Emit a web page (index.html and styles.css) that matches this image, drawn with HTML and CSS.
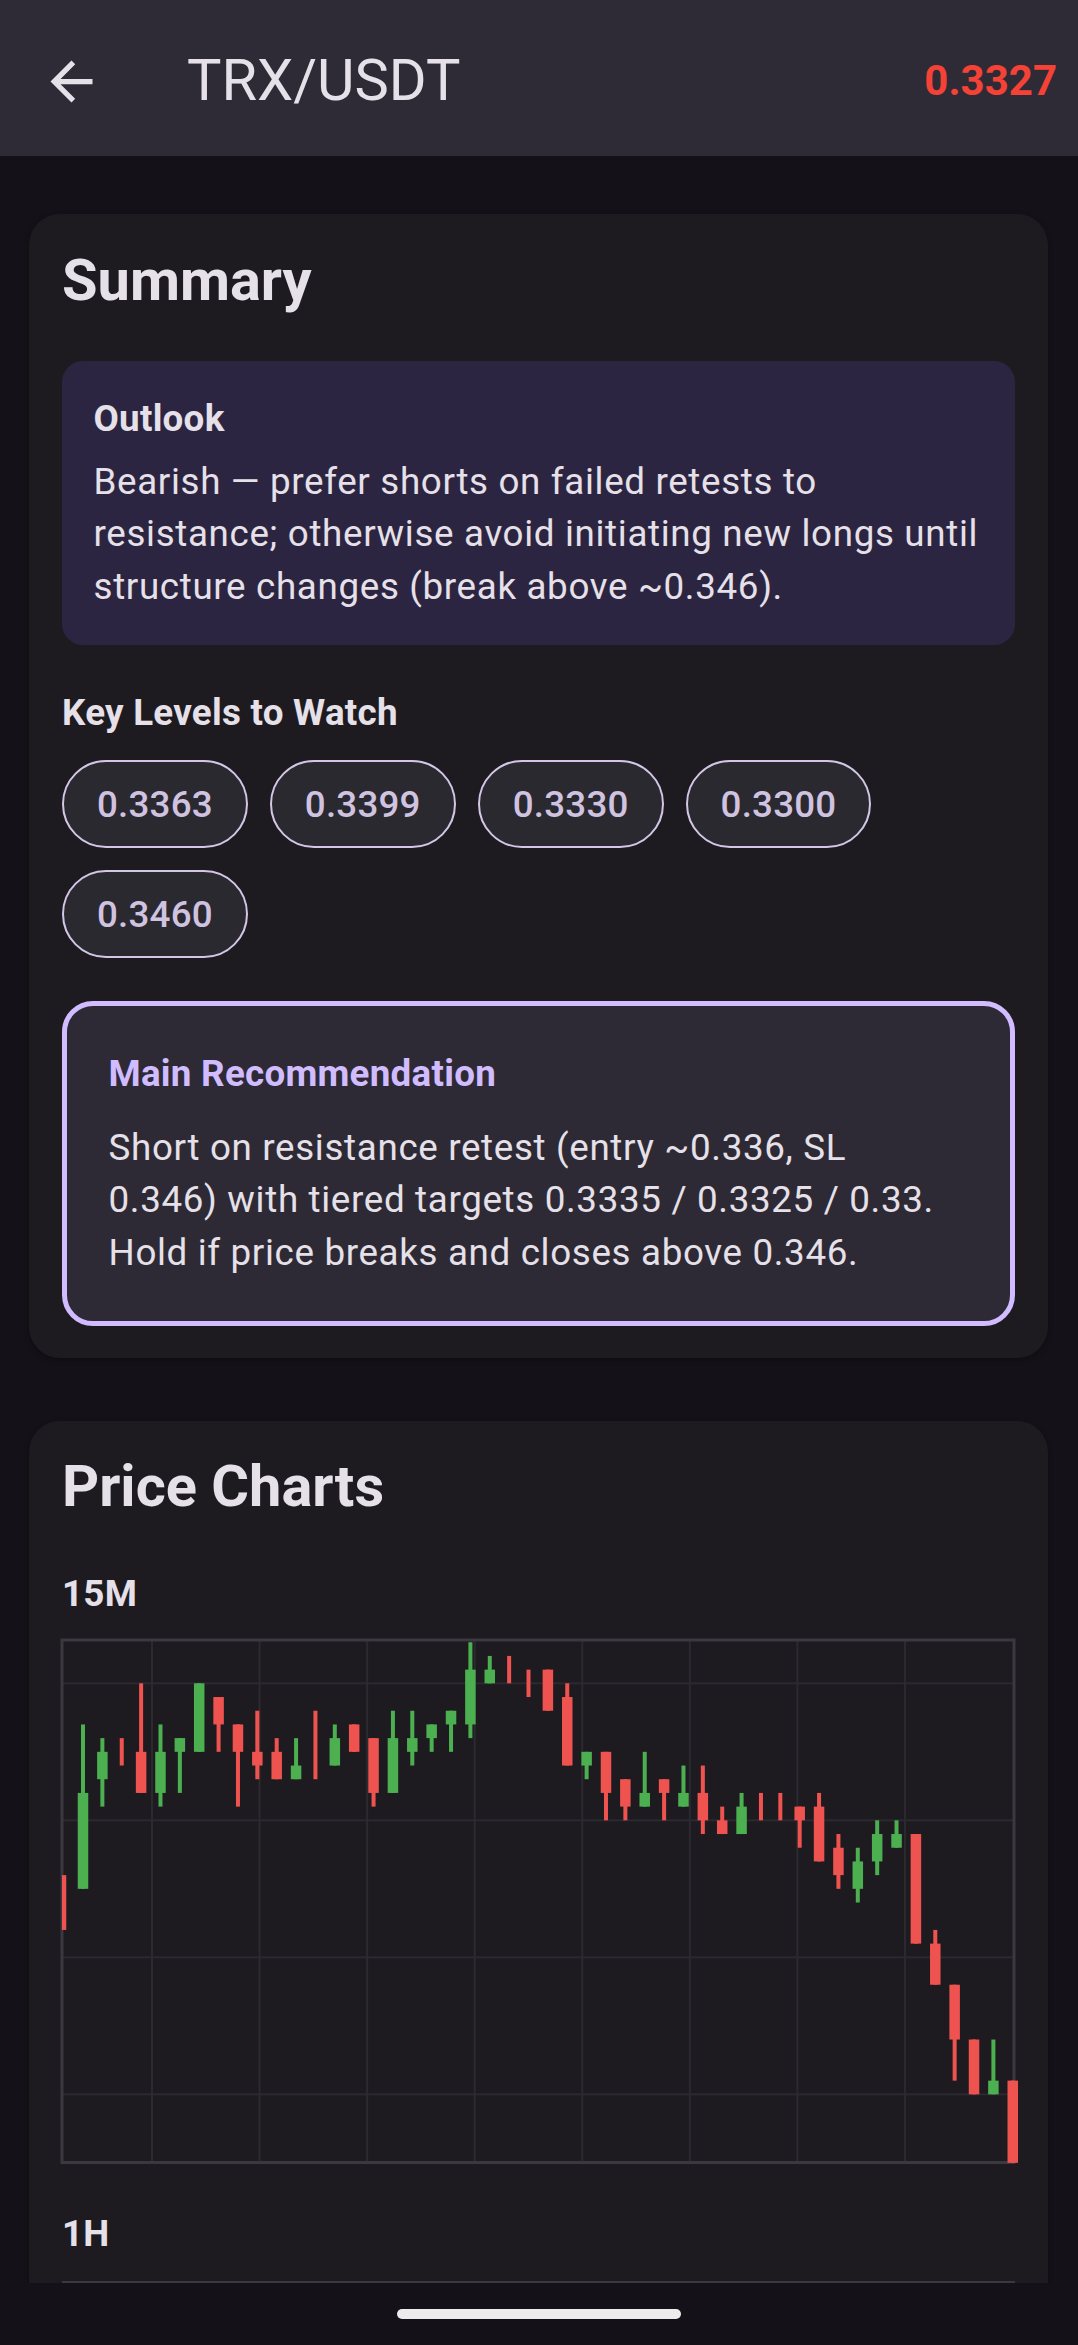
FILE: index.html
```html
<!DOCTYPE html>
<html lang="en">
<head>
<meta charset="utf-8">
<title>TRX/USDT</title>
<link rel="stylesheet" href="styles.css">
</head>
<body>
<div class="screen">
  <header class="appbar">
    <button class="back" aria-label="Back">
      <svg viewBox="0 0 24 24"><path d="M20 11H7.83l5.59-5.59L12 4l-8 8 8 8 1.41-1.41L7.83 13H20v-2z"/></svg>
    </button>
    <h1 class="title">TRX/USDT</h1>
    <span class="price">0.3327</span>
  </header>

  <main class="content">
    <section class="card">
      <h2 class="card-title">Summary</h2>
      <div class="outlook">
        <h3 class="label">Outlook</h3>
        <p class="body-text">Bearish — prefer shorts on failed retests to resistance; otherwise avoid initiating new longs until structure changes (break above ~0.346).</p>
      </div>
      <h3 class="label levels-title">Key Levels to Watch</h3>
      <div class="chips">
        <span class="chip">0.3363</span>
        <span class="chip">0.3399</span>
        <span class="chip">0.3330</span>
        <span class="chip">0.3300</span>
        <span class="chip">0.3460</span>
      </div>
      <div class="rec">
        <h3 class="label rec-title">Main Recommendation</h3>
        <p class="body-text rec-text">Short on resistance retest (entry ~0.336, SL<br>0.346) with tiered targets 0.3335 / 0.3325 / 0.33. Hold if price breaks and closes above 0.346.</p>
      </div>
    </section>

    <section class="card">
      <h2 class="card-title">Price Charts</h2>
      <div class="chart-block">
        <h3 class="label">15M</h3>
        <svg class="chart" id="chart15m" width="953" height="524" viewBox="0 0 953 524"></svg>
      </div>
      <div class="chart-block">
        <h3 class="label">1H</h3>
        <div class="chart-frame"></div>
      </div>
    </section>
  </main>

  <footer class="navbar"><span class="pill"></span></footer>
</div>
<script src="script.js"></script>
</body>
</html>
```

FILE: styles.css
```css
* { box-sizing: border-box; }

html, body {
  margin: 0;
  padding: 0;
}

body {
  background: #141218;
  font-family: Roboto, "Noto Sans", "Liberation Sans", sans-serif;
  color: #e6e0e9;
}

.screen {
  width: 1078px;
  height: 2345px;
  display: flex;
  flex-direction: column;
  overflow: hidden;
}

/* App bar */
.appbar {
  flex: 0 0 156px;
  background: #2e2b37;
  display: flex;
  align-items: center;
  padding: 6px 21px 0 40px;
}

.back {
  width: 63px;
  height: 63px;
  padding: 0;
  border: 0;
  background: none;
  display: flex;
}

.back svg {
  width: 63px;
  height: 63px;
  fill: #e6e0e9;
}

.title {
  flex: 1;
  margin: 0 0 0 84px;
  font-size: 57.75px;
  font-weight: 400;
  line-height: 1.172;
  color: #e6e0e9;
}

.price {
  font-size: 42px;
  font-weight: 700;
  color: #f44336;
  line-height: 1.172;
}

/* Content */
.content {
  flex: 1;
  overflow: hidden;
  padding: 58px 30px 0 29px;
  display: flex;
  flex-direction: column;
  gap: 63px;
}

.card {
  flex-shrink: 0;
  background: #1d1b20;
  border-radius: 31px;
  padding: 29.5px 33px 31.5px 33px;
  box-shadow: 0 2px 5px rgba(0, 0, 0, 0.35);
}

.card-title {
  margin: 0;
  font-size: 57.75px;
  font-weight: 700;
  line-height: 73.5px;
}

.label {
  margin: 0;
  font-size: 36.75px;
  font-weight: 700;
  line-height: 52.5px;
  letter-spacing: 0.26px;
}

.body-text {
  margin: 10.5px 0 0;
  font-size: 36.75px;
  font-weight: 400;
  line-height: 52.5px;
  letter-spacing: 0.66px;
}

.outlook {
  margin-top: 44px;
  background: #2c2541;
  border-radius: 21px;
  padding: 31.5px 26px 31.5px 31.5px;
}

.levels-title {
  margin-top: 42px;
}

.chips {
  margin-top: 21px;
  display: flex;
  flex-wrap: wrap;
  gap: 22px 22px;
}

.chip {
  height: 88px;
  display: flex;
  align-items: center;
  padding: 0 33px;
  border: 2px solid #d3c6e6;
  border-radius: 44px;
  background: #2b2930;
  color: #d0c3e0;
  font-size: 36.75px;
  font-weight: 500;
  letter-spacing: 0.2px;
}

.rec {
  margin-top: 43px;
  background: #2d2a35;
  border: 5.25px solid #d0bcff;
  border-radius: 31px;
  padding: 42px 40px 42px 41.5px;
}

.rec-title {
  color: #d0bcff;
}

.rec-text {
  margin-top: 21px;
}

/* Charts */
.chart-block {
  margin-top: 44px;
  display: flex;
  flex-direction: column;
  gap: 20px;
}

.chart {
  display: block;
  overflow: visible;
}

.chart-frame {
  height: 524px;
  border: 3px solid #3b393f;
}

/* Navigation bar */
.navbar {
  flex: 0 0 62px;
  background: #141218;
  display: flex;
  align-items: center;
  justify-content: center;
}

.pill {
  width: 284px;
  height: 10px;
  border-radius: 5px;
  background: #ececec;
}
```

FILE: script.js
```js
(function () {
  var NS = 'http://www.w3.org/2000/svg';
  var svg = document.getElementById('chart15m');
  var W = 952, H = 522.5;
  var GRID = '#2c2a31', FRAME = '#3b393f';
  var GREEN = '#4caf50', RED = '#ef5350';

  function y(t) { return 43.33 + 13.70 * t; }
  function cx(i) { return i === 0 ? -1 : 21 + (i - 1) * 19.37; }

  function el(name, attrs) {
    var e = document.createElementNS(NS, name);
    for (var k in attrs) e.setAttribute(k, attrs[k]);
    return e;
  }

  // clip for left edge
  var defs = el('defs', {});
  var clip = el('clipPath', { id: 'clipL' });
  clip.appendChild(el('rect', { x: 0, y: -10, width: 1000, height: 560 }));
  defs.appendChild(clip);
  svg.appendChild(defs);

  // horizontal grid lines
  [0, 10, 20, 30].forEach(function (t) {
    svg.appendChild(el('rect', { x: 0, y: y(t) - 1, width: W, height: 2, fill: GRID }));
  });
  // vertical grid lines
  for (var k = 0; k < 8; k++) {
    var gx = 90 + 107.57 * k;
    svg.appendChild(el('rect', { x: gx - 1, y: 0, width: 2, height: H, fill: GRID }));
  }
  // frame
  svg.appendChild(el('rect', { x: 0, y: 0, width: W, height: H, fill: 'none', stroke: FRAME, 'stroke-width': 3 }));

  // [color, high, bodyTop, bodyBottom, low] in ticks (0.0001) below 0.3360
  var data = [
    ['r', 14, 14, 18, 18],
    ['g', 3, 8, 15, 15],
    ['g', 4, 5, 7, 9],
    ['r', 4, null, null, 6],
    ['r', 0, 5, 8, 8],
    ['g', 3, 5, 8, 9],
    ['g', 4, 4, 5, 8],
    ['g', 0, 0, 5, 5],
    ['r', 1, 1, 3, 5],
    ['r', 3, 3, 5, 9],
    ['r', 2, 5, 6, 7],
    ['r', 4, 5, 7, 7],
    ['g', 4, 6, 7, 7],
    ['r', 2, null, null, 7],
    ['g', 3, 4, 6, 6],
    ['r', 3, 3, 5, 5],
    ['r', 4, 4, 8, 9],
    ['g', 2, 4, 8, 8],
    ['g', 2, 4, 5, 6],
    ['g', 3, 3, 4, 5],
    ['g', 2, 2, 3, 5],
    ['g', -3, -1, 3, 4],
    ['g', -2, -1, 0, 0],
    ['r', -2, null, null, 0],
    ['r', -1, null, null, 1],
    ['r', -1, -1, 2, 2],
    ['r', 0, 1, 6, 6],
    ['g', 5, 5, 6, 7],
    ['r', 5, 5, 8, 10],
    ['r', 7, 7, 9, 10],
    ['g', 5, 8, 9, 9],
    ['r', 7, 7, 8, 10],
    ['g', 6, 8, 9, 9],
    ['r', 6, 8, 10, 11],
    ['r', 9, 10, 11, 11],
    ['g', 8, 9, 11, 11],
    ['r', 8, null, null, 10],
    ['r', 8, null, null, 10],
    ['r', 9, 9, 10, 12],
    ['r', 8, 9, 13, 13],
    ['r', 11, 12, 14, 15],
    ['g', 12, 13, 15, 16],
    ['g', 10, 11, 13, 14],
    ['g', 10, 11, 12, 12],
    ['r', 11, 11, 19, 19],
    ['r', 18, 19, 22, 22],
    ['r', 22, 22, 26, 29],
    ['r', 26, 26, 30, 30],
    ['g', 26, 29, 30, 30],
    ['r', 29, 29, 35, 35]
  ];

  var g = el('g', { 'clip-path': 'url(#clipL)' });
  data.forEach(function (d, i) {
    var c = d[0] === 'g' ? GREEN : RED;
    var x = cx(i);
    if (d[4] > d[1]) {
      g.appendChild(el('rect', { x: x - 2, y: y(d[1]), width: 4, height: y(d[4]) - y(d[1]), fill: c }));
    }
    if (d[2] !== null) {
      g.appendChild(el('rect', { x: x - 5.25, y: y(d[2]), width: 10.5, height: y(d[3]) - y(d[2]), fill: c }));
    }
  });
  svg.appendChild(g);
})();
```
